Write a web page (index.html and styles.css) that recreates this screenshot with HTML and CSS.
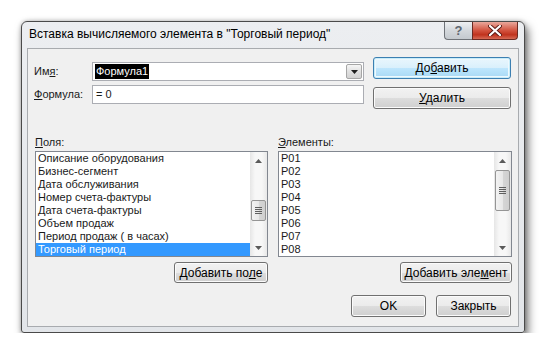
FILE: index.html
```html
<!DOCTYPE html>
<html lang="ru">
<head>
    <meta charset="UTF-8">
    <title>Вставка вычисляемого элемента</title>
    <link rel="stylesheet" href="styles.css">
</head>
<body>
    <div class="window">
        <div class="titlebar">
            <span class="title">Вставка вычисляемого элемента в "Торговый период"</span>
            <div class="caption-buttons">
                <span class="cap-btn cap-help">?</span>
                <span class="cap-btn cap-close">
                    <svg width="14" height="11" viewBox="0 0 14 11">
                        <path d="M2 1 L12 10 M12 1 L2 10" stroke="#5a1a14" stroke-width="4" stroke-linecap="round"/>
                        <path d="M2 1 L12 10 M12 1 L2 10" stroke="#ffffff" stroke-width="2.2" stroke-linecap="round"/>
                    </svg>
                </span>
            </div>
        </div>

        <div class="client">
            <div class="top">
                <div class="fields">
                    <label class="field-label">Им<u>я</u>:</label>
                    <div class="combo">
                        <span class="combo-text"><span class="sel">Формула1</span></span>
                        <span class="combo-arrow">
                            <svg width="7" height="4" viewBox="0 0 7 4"><path d="M0 0 H7 L3.5 4 Z" fill="#1e1e1e"/></svg>
                        </span>
                    </div>
                    <label class="field-label"><u>Ф</u>ормула:</label>
                    <div class="textbox">= 0</div>
                </div>
                <div class="top-buttons">
                    <button class="btn btn-default">До<u>б</u>авить</button>
                    <button class="btn"><u>У</u>далить</button>
                </div>
            </div>

            <div class="lists">
                <div class="list-col">
                    <div class="list-label"><u>П</u>оля:</div>
                    <div class="listbox">
                        <ul class="items">
                            <li>Описание оборудования</li>
                            <li>Бизнес-сегмент</li>
                            <li>Дата обслуживания</li>
                            <li>Номер счета-фактуры</li>
                            <li>Дата счета-фактуры</li>
                            <li>Объем продаж</li>
                            <li>Период продаж ( в часах)</li>
                            <li class="selected">Торговый период</li>
                        </ul>
                        <div class="scrollbar">
                            <span class="sb-arrow"><svg width="7" height="4" viewBox="0 0 7 4"><path d="M0 4 H7 L3.5 0 Z" fill="#5a5a5a"/></svg></span>
                            <div class="sb-track">
                                <div class="sb-thumb thumb-fields"><span class="grip"></span></div>
                            </div>
                            <span class="sb-arrow"><svg width="7" height="4" viewBox="0 0 7 4"><path d="M0 0 H7 L3.5 4 Z" fill="#5a5a5a"/></svg></span>
                        </div>
                    </div>
                    <button class="btn btn-add">Добавить по<u>л</u>е</button>
                </div>

                <div class="list-col">
                    <div class="list-label"><u>Э</u>лементы:</div>
                    <div class="listbox">
                        <ul class="items">
                            <li>P01</li>
                            <li>P02</li>
                            <li>P03</li>
                            <li>P04</li>
                            <li>P05</li>
                            <li>P06</li>
                            <li>P07</li>
                            <li>P08</li>
                        </ul>
                        <div class="scrollbar">
                            <span class="sb-arrow"><svg width="7" height="4" viewBox="0 0 7 4"><path d="M0 4 H7 L3.5 0 Z" fill="#5a5a5a"/></svg></span>
                            <div class="sb-track">
                                <div class="sb-thumb thumb-items"><span class="grip"></span></div>
                            </div>
                            <span class="sb-arrow"><svg width="7" height="4" viewBox="0 0 7 4"><path d="M0 0 H7 L3.5 4 Z" fill="#5a5a5a"/></svg></span>
                        </div>
                    </div>
                    <button class="btn btn-add btn-add-wide">Добавить эле<u>м</u>ент</button>
                </div>
            </div>

            <div class="bottom">
                <button class="btn btn-ok">OK</button>
                <button class="btn btn-ok">Закрыть</button>
            </div>
        </div>
    </div>
</body>
</html>
```

FILE: styles.css
```css
:root {
    --frame: #e2e5e9;
    --face: #f0f0f0;
    --text: #1a1a1a;
    --edit-border: #abadb3;
    --btn-border: #707070;
    --highlight: #3399ff;
}

body {
    margin: 0;
    background-color: #ffffff;
    font-family: "Liberation Sans", Arial, sans-serif;
    font-size: 11px;
    color: var(--text);
}

u {
    text-decoration: underline;
    text-underline-offset: 1px;
}

/* Cadre de la fenêtre */
.window {
    margin: 21px 0 0 21px;
    width: 504px;
    box-sizing: border-box;
    border: 1px solid #4a4a4a;
    border-radius: 6px 6px 3px 3px;
    background: linear-gradient(#eceef1, var(--frame));
    box-shadow: 3px 5px 10px rgba(0, 0, 0, 0.55), 0 0 4px rgba(0, 0, 0, 0.25);
    padding: 0 5px 5px 5px;
}

.titlebar {
    height: 26px;
    display: flex;
    align-items: flex-start;
}

.title {
    flex: 1;
    padding: 5px 0 0 2px;
    line-height: 15px;
    font-size: 12px;
    color: #000000;
    white-space: nowrap;
}

.caption-buttons {
    display: flex;
    margin-right: 1px;
}

.cap-btn {
    height: 18px;
    display: flex;
    align-items: center;
    justify-content: center;
    border: 1px solid #6f7378;
    border-top: none;
    box-sizing: border-box;
}

.cap-help {
    width: 28px;
    border-right: none;
    border-radius: 0 0 0 4px;
    background: linear-gradient(#eef0f2, #d4d8dc 50%, #c4c9ce);
    color: #5d6670;
    font-size: 13px;
    font-weight: bold;
    line-height: 1;
}

.cap-close {
    width: 46px;
    border-color: #6b2a22;
    border-radius: 0 0 4px 0;
    background: linear-gradient(#e9a89c, #d2533f 50%, #c0321d 75%, #d66a55);
}

/* Zone client */
.client {
    border: 1px solid #a8abaf;
    background-color: var(--face);
    padding: 8px 7px 9px 7px;
}

.top {
    display: flex;
    gap: 9px;
}

.fields {
    flex: 1;
    display: grid;
    grid-template-columns: 57px 1fr;
    row-gap: 4px;
    align-content: start;
    padding-top: 5px;
}

.field-label {
    line-height: 19px;
    margin-left: -1px;
}

.combo,
.textbox {
    height: 19px;
    box-sizing: border-box;
    border: 1px solid var(--edit-border);
    background-color: #ffffff;
}

.combo {
    display: flex;
}

.combo-text {
    flex: 1;
    padding: 1px 0 0 2px;
}

.sel {
    background-color: #000000;
    color: #ffffff;
    padding: 0 1px;
    line-height: 15px;
    display: inline-block;
}

.combo-arrow {
    width: 16px;
    margin: 1px;
    border: 1px solid #a6a6a6;
    border-radius: 2px;
    box-sizing: border-box;
    background: linear-gradient(#f6f6f6, #e0e0e0 50%, #d2d2d2);
    display: flex;
    align-items: center;
    justify-content: center;
}

.textbox {
    padding: 1px 3px;
    line-height: 15px;
}

.top-buttons {
    width: 138px;
    display: flex;
    flex-direction: column;
    gap: 8px;
}

/* Boutons façon Windows 7 */
.btn {
    font-family: inherit;
    font-size: 12px;
    color: #000000;
    height: 22px;
    padding: 0;
    border: 1px solid var(--btn-border);
    border-radius: 3px;
    background: linear-gradient(#f2f2f2, #ebebeb 50%, #dddddd 51%, #cfcfcf);
    box-shadow: inset 0 0 0 1px #fbfbfb;
    cursor: default;
}

.btn-default {
    border-color: #3c7fb1;
    background: linear-gradient(#eaf6fd, #d9f0fc 50%, #bee6fd 51%, #a7d9f5);
    box-shadow: inset 0 0 0 1px #c7ecf9, inset 0 0 0 2px #eef8fd;
}

.lists {
    display: grid;
    grid-template-columns: 233px 234px;
    column-gap: 10px;
    margin-top: 26px;
}

.list-col {
    display: flex;
    flex-direction: column;
}

.list-label {
    line-height: 15px;
    margin-bottom: 1px;
}

.listbox {
    height: 106px;
    box-sizing: border-box;
    border: 1px solid #828790;
    background-color: #ffffff;
    display: flex;
}

.items {
    flex: 1;
    list-style: none;
    margin: 0;
    padding: 0;
}

.items li {
    height: 13px;
    line-height: 13px;
    padding-left: 2px;
    white-space: nowrap;
}

.items li.selected {
    background-color: var(--highlight);
    color: #ffffff;
}

.scrollbar {
    width: 17px;
    display: flex;
    flex-direction: column;
    background: linear-gradient(90deg, #e6e6e6, #f7f7f7 30%, #f7f7f7 70%, #e8e8e8);
}

.sb-arrow {
    height: 17px;
    display: flex;
    align-items: center;
    justify-content: center;
}

.sb-track {
    flex: 1;
}

.sb-thumb {
    margin: 0 1px;
    border: 1px solid #959595;
    border-radius: 2px;
    background: linear-gradient(90deg, #f3f3f3, #e8e8e8 50%, #d6d6d6 51%, #cfcfcf);
    display: flex;
    align-items: center;
    justify-content: center;
    box-sizing: border-box;
}

.thumb-fields {
    height: 21px;
    margin-top: 31px;
}

.thumb-items {
    height: 41px;
    margin-top: 1px;
}

.grip {
    width: 7px;
    height: 7px;
    background: repeating-linear-gradient(#5f5f5f 0 1px, transparent 1px 2px);
}

.btn-add {
    align-self: flex-end;
    width: 94px;
    height: 21px;
    margin-top: 5px;
}

.btn-add-wide {
    width: 112px;
}

.bottom {
    display: flex;
    justify-content: flex-end;
    gap: 10px;
    margin-top: 12px;
    padding-right: 0;
}

.btn-ok {
    width: 75px;
}
```
